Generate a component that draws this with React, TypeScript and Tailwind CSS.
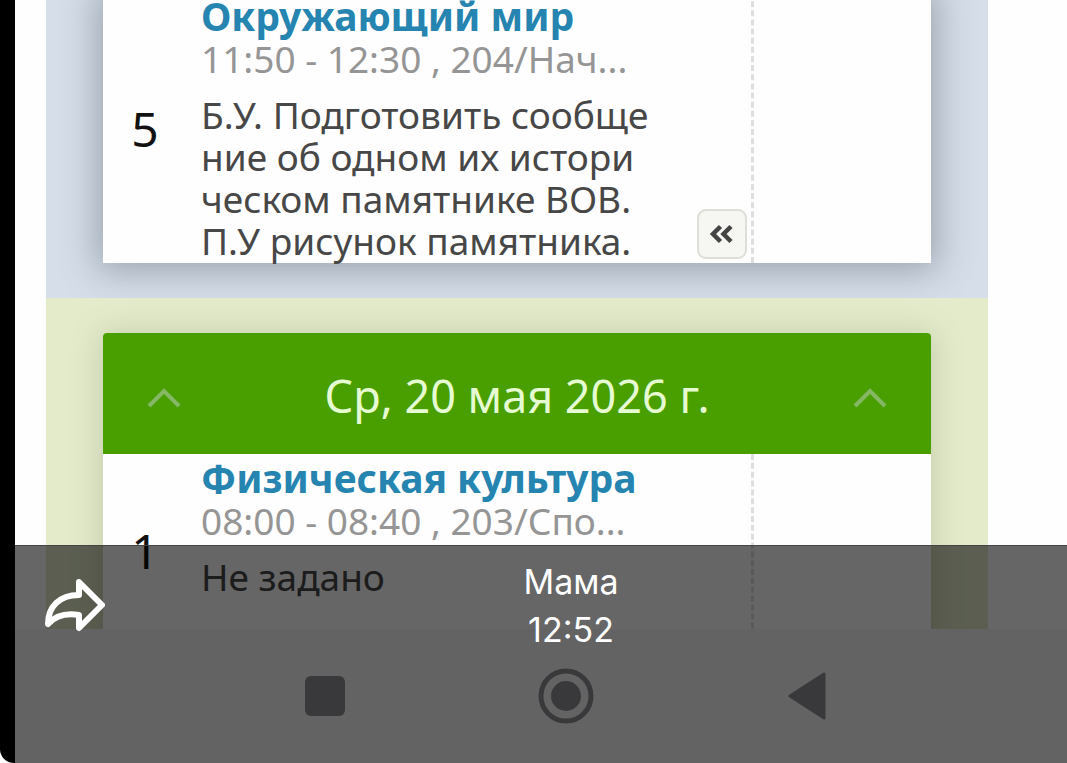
import { ChevronsLeft } from 'lucide-react'

type Lesson = {
  number: number
  subject: string
  time: string
  homework: string[]
  collapsible?: boolean
}

const worldLesson: Lesson = {
  number: 5,
  subject: 'Окружающий мир',
  time: '11:50 - 12:30 , 204/Нач...',
  homework: [
    'Б.У. Подготовить сообще',
    'ние об одном их истори',
    'ческом памятнике ВОВ.',
    'П.У рисунок памятника.',
  ],
  collapsible: true,
}

const sportLesson: Lesson = {
  number: 1,
  subject: 'Физическая культура',
  time: '08:00 - 08:40 , 203/Спо...',
  homework: ['Не задано'],
}

function LessonRow({ lesson }: { lesson: Lesson }) {
  return (
    <article className="flex min-h-[192px] bg-[#fefefe] pt-0.5">
      <div className="flex w-[84px] shrink-0 items-center justify-center text-[48px] leading-none text-[#111]">
        {lesson.number}
      </div>
      <div className="relative min-w-0 flex-1 pl-[14px] pb-px text-[37px] leading-[42px]">
        <a
          href="#lesson"
          className="block whitespace-nowrap text-[39px] font-bold leading-[44px] text-[#2584b0]"
        >
          {lesson.subject}
        </a>
        <p className="whitespace-nowrap text-[#959595]">{lesson.time}</p>
        <div className="pt-[14px] text-[#474747]">
          {lesson.homework.map((line) => (
            <p key={line} className="whitespace-nowrap">
              {line}
            </p>
          ))}
        </div>
        {lesson.collapsible && (
          <button
            type="button"
            aria-label="Свернуть"
            className="absolute bottom-1 right-1 flex h-[50px] w-[50px] items-center justify-center rounded-[9px] border-2 border-[#dcdfd6] bg-[#f6f7f2] text-[#444]"
          >
            <ChevronsLeft size={36} strokeWidth={3} strokeLinecap="butt" strokeLinejoin="miter" />
          </button>
        )}
      </div>
      <div className="-mt-0.5 w-[180px] shrink-0 border-l-[3px] border-dashed border-[#dedede]" />
    </article>
  )
}

function HeaderChevron({ label }: { label: string }) {
  return (
    <button type="button" aria-label={label} className="pt-1">
      <svg width="36" height="22" viewBox="0 0 36 22" fill="none">
        <path d="M3 19 18 4 33 19" stroke="#86b764" strokeWidth="4" />
      </svg>
    </button>
  )
}

function ShareIcon() {
  return (
    <svg width="60" height="56" viewBox="0 0 60 56" fill="none">
      <path
        d="M33 4 56 27 33 50V37C21 35 10 37 2 46C2 29 13 17 33 17Z"
        stroke="white"
        strokeWidth="6"
        strokeLinejoin="round"
        className="translate-x-px"
      />
    </svg>
  )
}

function SystemNav() {
  return (
    <nav className="grid h-[134px] shrink-0 grid-cols-3 justify-items-center bg-[#f7f7fb] pl-[189px] pr-[140px] pt-[39px]">
      <button type="button" aria-label="Недавние" className="h-14">
        <svg width="56" height="56" viewBox="0 0 56 56">
          <rect x="8" y="8" width="40" height="40" rx="6" fill="#909093" />
        </svg>
      </button>
      <button type="button" aria-label="Домой" className="h-14">
        <svg width="56" height="56" viewBox="0 0 56 56">
          <circle cx="28" cy="28" r="25" fill="none" stroke="#909093" strokeWidth="5" />
          <circle cx="28" cy="28" r="15" fill="#909093" />
        </svg>
      </button>
      <button type="button" aria-label="Назад" className="h-14">
        <svg width="56" height="56" viewBox="0 0 56 56">
          <path
            d="M11 28 45 6V50Z"
            fill="#909093"
            stroke="#909093"
            strokeWidth="3"
            strokeLinejoin="round"
          />
        </svg>
      </button>
    </nav>
  )
}

export default function App() {
  return (
    <div className="h-screen bg-white font-['Noto_Sans',sans-serif]">
      <div className="relative flex h-full flex-col overflow-hidden rounded-bl-[14px] border-l-[15px] border-black bg-[#fefefe]">
        <main className="-mt-2 min-h-0 flex-1 overflow-hidden pl-[31px] pr-[79px]">
          <section className="overflow-hidden bg-[#d6deea] px-[57px] pb-[35px]">
            <div className="shadow-[0_2px_34px_6px_rgba(75,85,90,0.42)]">
              <LessonRow lesson={worldLesson} />
            </div>
          </section>
          <section className="overflow-hidden bg-[#e3ebca] px-[57px] pt-[35px]">
            <div className="rounded-t shadow-[0_2px_30px_2px_rgba(110,115,85,0.25)]">
              <header className="flex h-[121px] items-center justify-between rounded-t bg-[#4a9f00] px-[43px] pt-1">
                <HeaderChevron label="Предыдущий день" />
                <h2 className="text-[45px] leading-none text-[#e6fbd2]">Ср, 20 мая 2026 г.</h2>
                <HeaderChevron label="Следующий день" />
              </header>
              <LessonRow lesson={sportLesson} />
            </div>
          </section>
        </main>
        <SystemNav />

        {/* caption over the open photo */}
        <div className="absolute inset-x-0 bottom-0 flex h-[218px] items-start border-t border-[#444] bg-black/60 px-[30px] pt-3 font-[Inter,sans-serif] text-white">
          <button type="button" aria-label="Поделиться" className="pt-5">
            <ShareIcon />
          </button>
          <div className="flex-1 text-center text-[34px] leading-[48px]">
            <p>Мама</p>
            <p>12:52</p>
          </div>
        </div>
      </div>
    </div>
  )
}
